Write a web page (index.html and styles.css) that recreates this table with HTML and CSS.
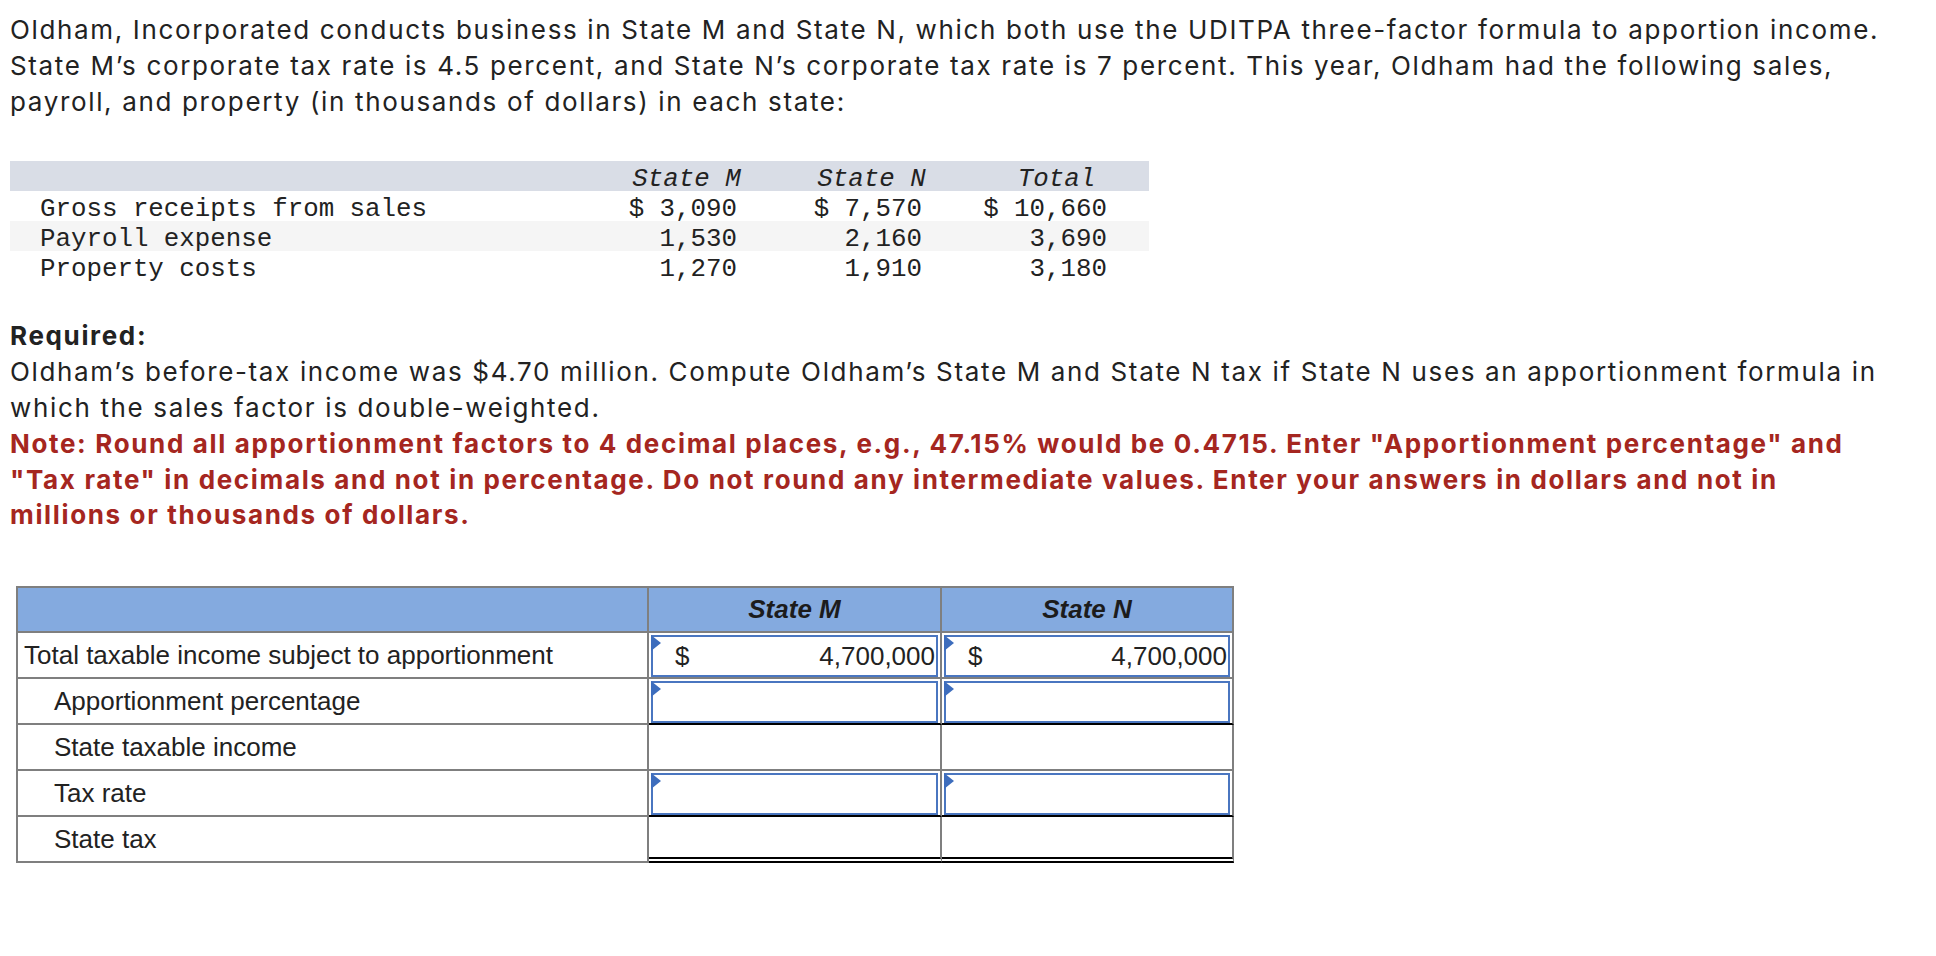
FILE: index.html
```html
<!DOCTYPE html>
<html lang="en">
<head>
<meta charset="utf-8">
<title>Oldham apportionment</title>
<link rel="stylesheet" href="styles.css">
</head>
<body>
<div class="page">
  <p class="text">Oldham, Incorporated conducts business in State M and State N, which both use the UDITPA three-factor formula to apportion income.<br>State M’s corporate tax rate is 4.5 percent, and State N’s corporate tax rate is 7 percent. This year, Oldham had the following sales,<br>payroll, and property (in thousands of dollars) in each state:</p>

  <table class="data">
    <thead>
      <tr><th class="lbl"></th><th>State M</th><th>State N</th><th>Total</th></tr>
    </thead>
    <tbody>
      <tr><td class="lbl">Gross receipts from sales</td><td>$ 3,090</td><td>$ 7,570</td><td>$ 10,660</td></tr>
      <tr class="shade"><td class="lbl">Payroll expense</td><td>1,530</td><td>2,160</td><td>3,690</td></tr>
      <tr><td class="lbl">Property costs</td><td>1,270</td><td>1,910</td><td>3,180</td></tr>
    </tbody>
  </table>

  <p class="text req"><b>Required:</b><br>Oldham’s before-tax income was $4.70 million. Compute Oldham’s State M and State N tax if State N uses an apportionment formula in<br>which the sales factor is double-weighted.<br><b class="note">Note: Round all apportionment factors to 4 decimal places, e.g., 47.15% would be 0.4715. Enter "Apportionment percentage" and<br>"Tax rate" in decimals and not in percentage. Do not round any intermediate values. Enter your answers in dollars and not in<br>millions or thousands of dollars.</b></p>

  <table class="answer">
    <colgroup><col class="c1"><col class="c2"><col class="c3"></colgroup>
    <thead>
      <tr><th></th><th>State M</th><th>State N</th></tr>
    </thead>
    <tbody>
      <tr>
        <td>Total taxable income subject to apportionment</td>
        <td class="val"><div class="inp"><span class="cur">$</span><span class="num">4,700,000</span></div></td>
        <td class="val"><div class="inp"><span class="cur">$</span><span class="num">4,700,000</span></div></td>
      </tr>
      <tr class="underline">
        <td class="ind">Apportionment percentage</td>
        <td class="val"><div class="inp"></div></td>
        <td class="val"><div class="inp"></div></td>
      </tr>
      <tr>
        <td class="ind">State taxable income</td>
        <td class="val"></td>
        <td class="val"></td>
      </tr>
      <tr class="underline">
        <td class="ind">Tax rate</td>
        <td class="val"><div class="inp"></div></td>
        <td class="val"><div class="inp"></div></td>
      </tr>
      <tr class="double">
        <td class="ind">State tax</td>
        <td class="val"></td>
        <td class="val"></td>
      </tr>
    </tbody>
  </table>
</div>
</body>
</html>
```

FILE: styles.css
```css
html, body {
  margin: 0;
  padding: 0;
  background: #ffffff;
}

.page {
  padding: 12px 0 40px 10px;
  color: #222222;
}

.text {
  margin: 0;
  font-family: "Inter", "Liberation Sans", sans-serif;
  font-size: 26px;
  letter-spacing: 1.65px;
  line-height: 35.8px;
  color: #222222;
}

.text b {
  font-weight: 700;
}

.text .note {
  color: #a52620;
}

/* data table */
.data {
  margin-top: 42px;
  border-collapse: collapse;
  font-family: "Liberation Mono", "Courier New", monospace;
  font-size: 25.8px;
  color: #222222;
}

.data th,
.data td {
  height: 23px;
  padding: 7px 42px 0 0;
  width: 143px;
  text-align: right;
  white-space: pre;
  font-weight: 400;
  line-height: 23px;
}

.data thead tr {
  background: #d9dde6;
}

.data th {
  font-style: italic;
  text-align: center;
  padding: 7px 0 0 0;
  width: 185px;
}

.data .lbl {
  width: 554px;
  padding: 7px 0 0 30px;
  text-align: left;
}

.data .shade {
  background: #f5f5f5;
}

.req {
  margin-top: 37px;
}

/* answer table */
.answer {
  margin: 53px 0 0 6px;
  border-collapse: separate;
  border-spacing: 0;
  table-layout: fixed;
  width: 1218px;
  border-top: 2px solid #7f7f7f;
  border-left: 2px solid #7f7f7f;
  font-family: "Liberation Sans", Arial, sans-serif;
  font-size: 26px;
  color: #222222;
}

.answer .c1 { width: 631px; }
.answer .c2 { width: 293px; }
.answer .c3 { width: 292px; }

.answer th,
.answer td {
  border-right: 2px solid #7f7f7f;
  border-bottom: 2px solid #7f7f7f;
  padding: 0;
  vertical-align: middle;
}

.answer th {
  height: 43px;
  background: #84aadf;
  font-style: italic;
  font-weight: 700;
  text-align: center;
  color: #1c1c1c;
}

.answer td {
  height: 44px;
  padding: 0 0 0 6px;
}

.answer td.ind {
  padding-left: 36px;
}

.answer td.val {
  padding: 0;
  vertical-align: top;
}

.answer .underline td.val {
  border-bottom-color: #000000;
}

.answer .double td {
  height: 40px;
}

.answer .double td.val {
  border-bottom: 6px double #000000;
}

.inp {
  position: relative;
  box-sizing: border-box;
  height: 42px;
  margin: 2px 2px 0 2px;
  border: 2px solid #4a76c0;
  display: flex;
  align-items: center;
  justify-content: space-between;
  padding: 0 1px 0 22px;
}

.inp::before {
  content: "";
  position: absolute;
  left: -2px;
  top: -2px;
  width: 0;
  height: 0;
  border-top: 8px solid transparent;
  border-bottom: 8px solid transparent;
  border-left: 10px solid #3d6dbd;
}
```
